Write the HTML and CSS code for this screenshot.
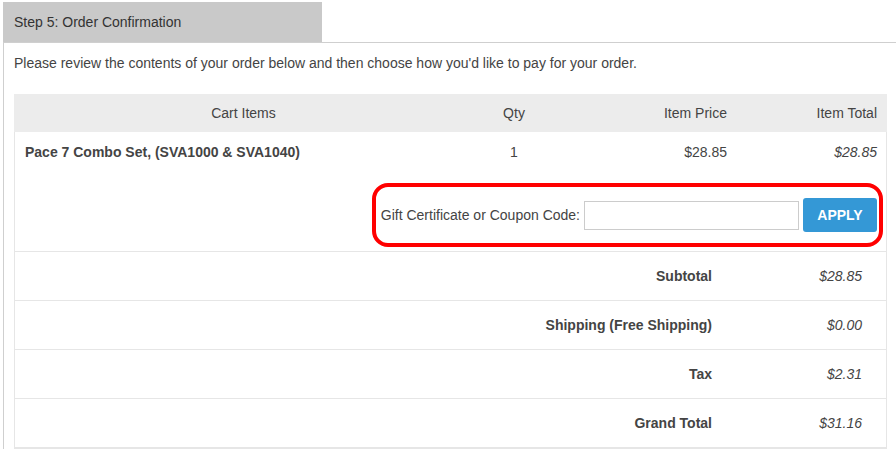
FILE: index.html
```html
<!DOCTYPE html>
<html lang="en">

<head>
      <meta charset="UTF-8">
      <meta name="viewport" content="width=device-width, initial-scale=1.0">
      <title>Order Confirmation</title>
      <link rel="stylesheet" href="styles.css">
</head>

<body>
      <div class="tab">Step 5: Order Confirmation</div>
      <div class="panel">
            <p class="intro">Please review the contents of your order below and then choose how you'd like to pay for your order.</p>
            <div class="cart">
                  <div class="cart-row cart-head">
                        <div class="c-item">Cart Items</div>
                        <div class="c-qty">Qty</div>
                        <div class="c-price">Item Price</div>
                        <div class="c-total">Item Total</div>
                  </div>
                  <div class="cart-row cart-line">
                        <div class="c-item product">Pace 7 Combo Set, (SVA1000 &amp; SVA1040)</div>
                        <div class="c-qty">1</div>
                        <div class="c-price">$28.85</div>
                        <div class="c-total money">$28.85</div>
                  </div>
                  <div class="coupon-row">
                        <form class="coupon" onsubmit="return false">
                              <label for="couponCode">Gift Certificate or Coupon Code:</label>
                              <input type="text" id="couponCode">
                              <button type="submit">APPLY</button>
                        </form>
                  </div>
                  <div class="sum-row">
                        <div class="sum-label">Subtotal</div>
                        <div class="money">$28.85</div>
                  </div>
                  <div class="sum-row">
                        <div class="sum-label">Shipping (Free Shipping)</div>
                        <div class="money">$0.00</div>
                  </div>
                  <div class="sum-row">
                        <div class="sum-label">Tax</div>
                        <div class="money">$2.31</div>
                  </div>
                  <div class="sum-row">
                        <div class="sum-label">Grand Total</div>
                        <div class="money">$31.16</div>
                  </div>
            </div>
      </div>
</body>

</html>
```

FILE: styles.css
```css
body {
      font-family: "Liberation Sans", Arial, sans-serif;
      font-size: 14px;
      color: #444;
      background-color: #fff;
      margin: 0;
      padding: 2px 0 0 3px;
}

.tab {
      width: 308px;
      height: 40px;
      line-height: 40px;
      padding-left: 11px;
      background-color: #c9c9c9;
      color: #333;
}

.panel {
      border-top: 1px solid #cfcfcf;
      border-left: 1px solid #cfcfcf;
      padding: 10px 9px 0 10px;
}

.intro {
      margin: 0 0 21px;
      line-height: 20px;
}

.cart {
      border: 1px solid #e6e6e6;
      border-top: none;
}

.cart-row {
      display: grid;
      grid-template-columns: 457px 84px 181px 149px;
      align-items: center;
}

.cart-head {
      height: 38px;
      background-color: #ececec;
      margin-left: -1px;
      margin-right: -1px;
      padding: 0 1px;
}

.cart-line {
      height: 40px;
}

.c-item {
      text-align: center;
}

.c-item.product {
      text-align: left;
      padding-left: 10px;
      font-weight: bold;
}

.c-qty {
      text-align: center;
}

.c-price {
      text-align: right;
      padding-right: 10px;
}

.c-total {
      text-align: right;
      padding-right: 9px;
}

.money {
      font-style: italic;
}

.coupon-row {
      display: flex;
      justify-content: flex-end;
      padding: 11px 3px 4px 0;
      border-bottom: 1px solid #e6e6e6;
}

.coupon {
      display: flex;
      align-items: center;
      gap: 4px;
      margin: 0;
      padding: 11px 2px 11px 5px;
      border: 4px solid #f00;
      border-radius: 16px;
}

.coupon label {
      color: #444;
}

.coupon input {
      width: 215px;
      height: 29px;
      box-sizing: border-box;
      border: 1px solid #ccc;
      padding: 4px 6px;
      font-size: 14px;
      font-family: inherit;
}

.coupon button {
      width: 74px;
      height: 34px;
      border: none;
      border-radius: 3px;
      background-color: #3498d6;
      color: #fff;
      font-family: inherit;
      font-weight: bold;
      font-size: 14px;
      cursor: pointer;
}

.sum-row {
      display: grid;
      grid-template-columns: 1fr 150px;
      align-items: center;
      height: 48px;
      border-bottom: 1px solid #e6e6e6;
}

.sum-row > div {
      text-align: right;
      padding-right: 24px;
}

.sum-label {
      font-weight: bold;
}
```
